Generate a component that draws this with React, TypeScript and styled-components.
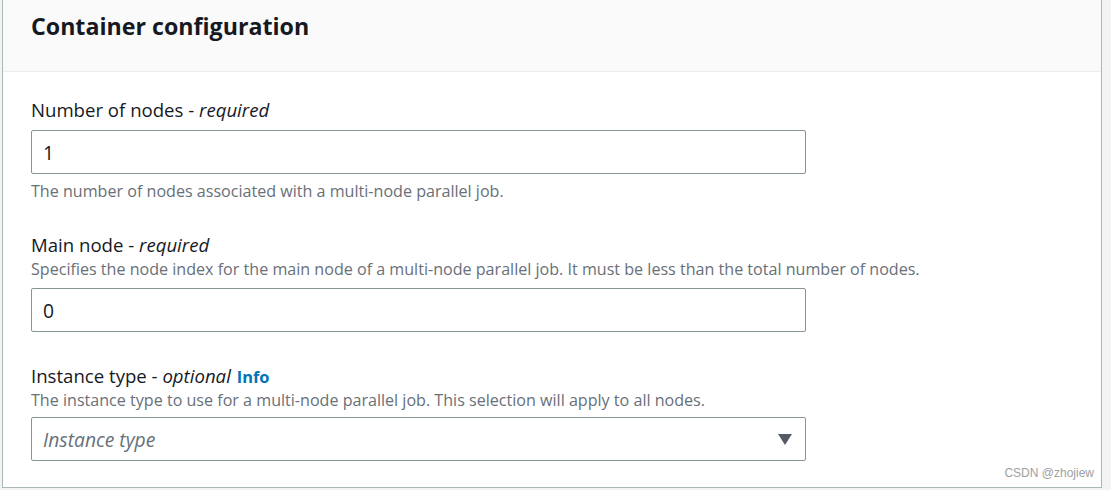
import React from "react";
import styled, { createGlobalStyle } from "styled-components";

const GlobalStyle = createGlobalStyle`
  html, body {
    margin: 0;
    padding: 0;
    background: #f2f3f3;
    font-family: "Open Sans", "Noto Sans", Arial, sans-serif;
    color: #16191f;
  }
`;

const Card = styled.section`
  margin-left: 2px;
  width: 1100px;
  height: 488px;
  box-sizing: border-box;
  border: 1px solid #aab7b8;
  border-top: none;
  background: #ffffff;
  position: relative;
`;

const Header = styled.header`
  display: flex;
  align-items: flex-start;
  height: 72px;
  box-sizing: border-box;
  padding: 11px 28px 0;
  background: #fafafa;
  border-bottom: 1px solid #eaeded;
`;

const Title = styled.h2`
  margin: 0;
  font-size: 23.2px;
  line-height: 30px;
  font-weight: 700;
  color: #16191f;
`;

const Body = styled.div`
  display: flex;
  flex-direction: column;
  padding: 27px 28px 0;
`;

const Field = styled.div<{ first?: boolean }>`
  display: flex;
  flex-direction: column;
  margin-top: ${(p) => (p.first ? "0" : "33px")};
`;

const Label = styled.label`
  height: 22px;
  font-size: 18.6px;
  line-height: 22px;
  color: #16191f;

  & em {
    font-style: italic;
  }
`;

const InfoLink = styled.a`
  margin-left: 6px;
  font-size: 16.4px;
  line-height: 22px;
  font-weight: 700;
  color: #0073bb;
  text-decoration: none;
`;

const Description = styled.p<{ after?: boolean }>`
  margin: ${(p) => (p.after ? "7px 0 0" : "3px 0 0")};
  font-size: 16.1px;
  line-height: 20px;
  color: #687078;
`;

const Input = styled.div<{ gap: number; placeholder?: boolean }>`
  display: flex;
  align-items: center;
  justify-content: space-between;
  width: 775px;
  height: 44px;
  box-sizing: border-box;
  margin-top: ${(p) => p.gap}px;
  padding: 0 13px 0 11px;
  border: 1px solid #879596;
  border-radius: 2px;
  font-size: 19.3px;
  font-style: ${(p) => (p.placeholder ? "italic" : "normal")};
  color: ${(p) => (p.placeholder ? "#687078" : "#16191f")};
`;

const Caret = styled.svg`
  width: 14px;
  height: 11px;
  fill: #545b64;
`;

const Watermark = styled.span`
  position: absolute;
  right: 7px;
  bottom: 7px;
  font-family: "Liberation Sans", Arial, sans-serif;
  font-size: 12px;
  color: #a0a0a0;
`;

export default function App() {
  return (
    <>
      <GlobalStyle />
      <Card>
        <Header>
          <Title>Container configuration</Title>
        </Header>
        <Body>
          <Field first>
            <Label>
              Number of nodes - <em>required</em>
            </Label>
            <Input gap={9}>1</Input>
            <Description after>
              The number of nodes associated with a multi-node parallel job.
            </Description>
          </Field>
          <Field>
            <Label>
              Main node - <em>required</em>
            </Label>
            <Description>
              Specifies the node index for the main node of a multi-node
              parallel job. It must be less than the total number of nodes.
            </Description>
            <Input gap={9}>0</Input>
          </Field>
          <Field>
            <Label>
              Instance type - <em>optional</em>
              <InfoLink href="#">Info</InfoLink>
            </Label>
            <Description>
              The instance type to use for a multi-node parallel job. This
              selection will apply to all nodes.
            </Description>
            <Input gap={7} placeholder>
              Instance type
              <Caret viewBox="0 0 14 11">
                <path d="M0 0 H14 L7 11 Z" />
              </Caret>
            </Input>
          </Field>
        </Body>
        <Watermark>CSDN @zhojiew</Watermark>
      </Card>
    </>
  );
}
